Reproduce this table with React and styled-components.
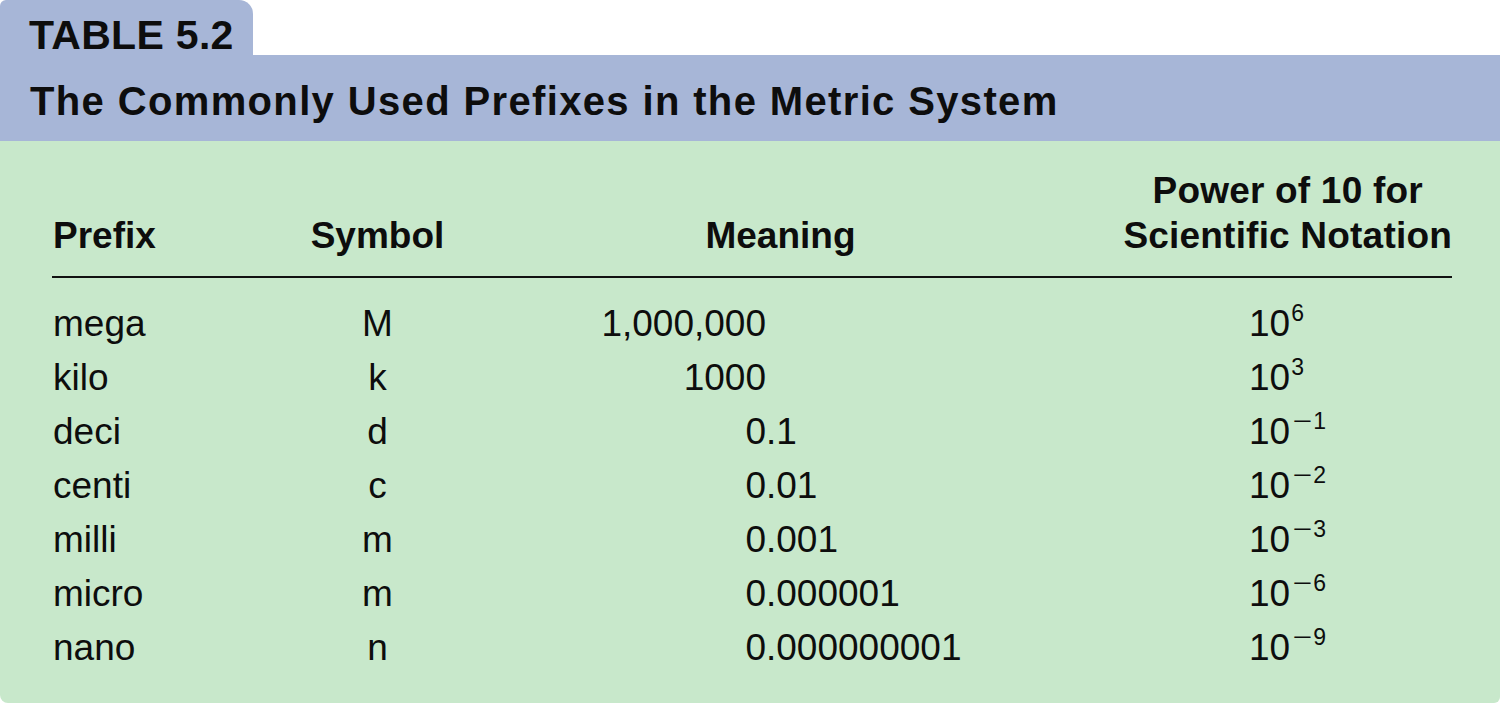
import React from "react";
import styled, { createGlobalStyle } from "styled-components";

const rows = [
  { prefix: "mega", symbol: "M", whole: "1,000,000", frac: "", exp: "6" },
  { prefix: "kilo", symbol: "k", whole: "1000", frac: "", exp: "3" },
  { prefix: "deci", symbol: "d", whole: "0", frac: ".1", exp: "1", neg: true },
  { prefix: "centi", symbol: "c", whole: "0", frac: ".01", exp: "2", neg: true },
  { prefix: "milli", symbol: "m", whole: "0", frac: ".001", exp: "3", neg: true },
  { prefix: "micro", symbol: "m", whole: "0", frac: ".000001", exp: "6", neg: true },
  { prefix: "nano", symbol: "n", whole: "0", frac: ".000000001", exp: "9", neg: true },
];

const App = () => {
  return (
    <>
      <GlobalStyle />
      <Card>
        <Tab>TABLE 5.2</Tab>
        <TitleBar>The Commonly Used Prefixes in the Metric System</TitleBar>
        <Body>
          <HeadRow>
            <HeadCell>Prefix</HeadCell>
            <HeadCell $center>Symbol</HeadCell>
            <HeadCell $center>Meaning</HeadCell>
            <PowerHead>
              Power of 10 for
              <br />
              Scientific Notation
            </PowerHead>
          </HeadRow>
          <Rule />
          {rows.map((r) => (
            <Row key={r.prefix}>
              <Cell>{r.prefix}</Cell>
              <Cell $center>{r.symbol}</Cell>
              <Meaning>
                <Whole>{r.whole}</Whole>
                <Frac>{r.frac}</Frac>
              </Meaning>
              <Power>
                10
                <Sup>
                  {r.neg && <Minus>−</Minus>}
                  {r.exp}
                </Sup>
              </Power>
            </Row>
          ))}
        </Body>
      </Card>
    </>
  );
};

const GlobalStyle = createGlobalStyle`
  body {
    margin: 0;
    background: #ffffff;
    font-family: "Liberation Sans", Arial, sans-serif;
    color: #0d0d0d;
  }
`;

const Card = styled.div`
  width: 1500px;
  display: flex;
  flex-direction: column;
  align-items: flex-start;
`;

const Tab = styled.div`
  width: 253px;
  height: 55px;
  box-sizing: border-box;
  padding: 15px 0 0 29px;
  background: #a7b6d7;
  border-radius: 6px 14px 0 0;
  font-size: 41px;
  line-height: 41px;
  font-weight: 700;
  letter-spacing: 0.3px;
`;

const TitleBar = styled.div`
  width: 100%;
  height: 86px;
  box-sizing: border-box;
  padding: 26px 0 0 30px;
  background: #a7b6d7;
  font-size: 40px;
  line-height: 40px;
  font-weight: 700;
  letter-spacing: 1.36px;
`;

const Body = styled.div`
  width: 100%;
  box-sizing: border-box;
  padding: 27px 48px 28px 52px;
  background: #c8e8cb;
  border-radius: 0 0 6px 8px;
`;

const columns = `198px 255px 551px 396px`;

const HeadRow = styled.div`
  display: grid;
  grid-template-columns: ${columns};
  align-items: end;
  font-size: 37px;
  line-height: 45px;
  font-weight: 700;
`;

const HeadCell = styled.div`
  text-align: ${(p) => (p.$center ? "center" : "left")};
  padding-left: ${(p) => (p.$center ? "0" : "1px")};
`;

const PowerHead = styled.div`
  justify-self: end;
  text-align: center;
  letter-spacing: 0.2px;
`;

const Rule = styled.div`
  height: 2px;
  margin: 18px 0 19px;
  background: #111;
`;

const Row = styled.div`
  display: grid;
  grid-template-columns: ${columns};
  height: 54px;
  font-size: 37px;
  line-height: 54px;
`;

const Cell = styled.div`
  text-align: ${(p) => (p.$center ? "center" : "left")};
  padding-left: ${(p) => (p.$center ? "0" : "1px")};
`;

const Meaning = styled.div`
  display: grid;
  grid-template-columns: 261px 1fr;
`;

const Whole = styled.span`
  text-align: right;
`;

const Frac = styled.span`
  text-align: left;
`;

const Power = styled.div`
  padding-left: 193px;
  white-space: nowrap;
`;

const Sup = styled.span`
  font-size: 23px;
  line-height: 0;
  vertical-align: 15px;
  margin-left: 1px;
`;

const Minus = styled.span`
  display: inline-block;
  width: 17px;
  margin: 0 2px 0 3px;
  text-align: center;
  transform: scaleX(1.45);
`;

export default App;
